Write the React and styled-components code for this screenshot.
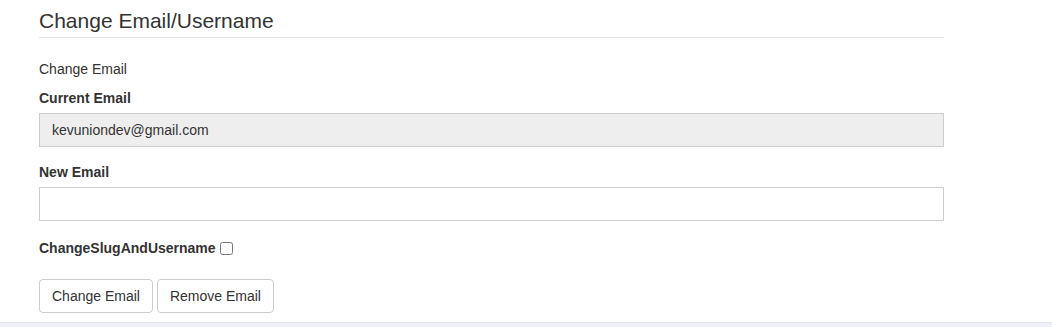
import styled, { createGlobalStyle } from "styled-components";

const GlobalStyle = createGlobalStyle`
  body {
    margin: 0;
    background: #fff;
    font-family: "Liberation Sans", Arial, sans-serif;
    color: #333;
  }
`;

const Page = styled.div`
  height: 327px;
  display: flex;
  flex-direction: column;
  overflow: hidden;
`;

const Content = styled.div`
  width: 905px;
  padding-left: 39px;
  padding-bottom: 9px;
`;

const Title = styled.h3`
  margin: 10px 0 0;
  font-size: 21px;
  font-weight: 400;
  line-height: 22px;
  padding-bottom: 5px;
  border-bottom: 1px solid #e5e5e5;
`;

const SubTitle = styled.div`
  margin-top: 22px;
  font-size: 14px;
  line-height: 18px;
`;

const Label = styled.label`
  display: flex;
  align-items: center;
  gap: 4px;
  margin-top: ${({ $top }) => $top}px;
  font-size: 14px;
  font-weight: 700;
  line-height: 18px;
`;

const Input = styled.input`
  display: block;
  box-sizing: border-box;
  width: 100%;
  height: 34px;
  margin-top: 6px;
  padding: 6px 12px;
  border: 1px solid #ccc;
  border-radius: 0;
  background: ${({ readOnly }) => (readOnly ? "#eee" : "#fff")};
  font-family: inherit;
  font-size: 14px;
  color: #333;
  outline: none;
`;

const Checkbox = styled.input`
  width: 13px;
  height: 13px;
  margin: 0;
`;

const Buttons = styled.div`
  display: flex;
  gap: 4px;
  margin-top: 22px;
`;

const Button = styled.button`
  height: 34px;
  padding: 6px 12px;
  border: 1px solid #ccc;
  border-radius: 4px;
  background: #fff;
  font-family: inherit;
  font-size: 14px;
  color: #333;
  cursor: pointer;
`;

const Footer = styled.div`
  flex: 1;
  border-top: 1px solid #dde2ea;
  background: #eef1f5;
`;

export default function App() {
  return (
    <>
      <GlobalStyle />
      <Page>
        <Content>
          <Title>Change Email/Username</Title>
          <SubTitle>Change Email</SubTitle>
          <Label $top={11}>Current Email</Label>
          <Input readOnly value="kevuniondev@gmail.com" />
          <Label $top={16}>New Email</Label>
          <Input type="email" />
          <Label $top={18}>
            ChangeSlugAndUsername <Checkbox type="checkbox" />
          </Label>
          <Buttons>
            <Button>Change Email</Button>
            <Button>Remove Email</Button>
          </Buttons>
        </Content>
        <Footer />
      </Page>
    </>
  );
}
